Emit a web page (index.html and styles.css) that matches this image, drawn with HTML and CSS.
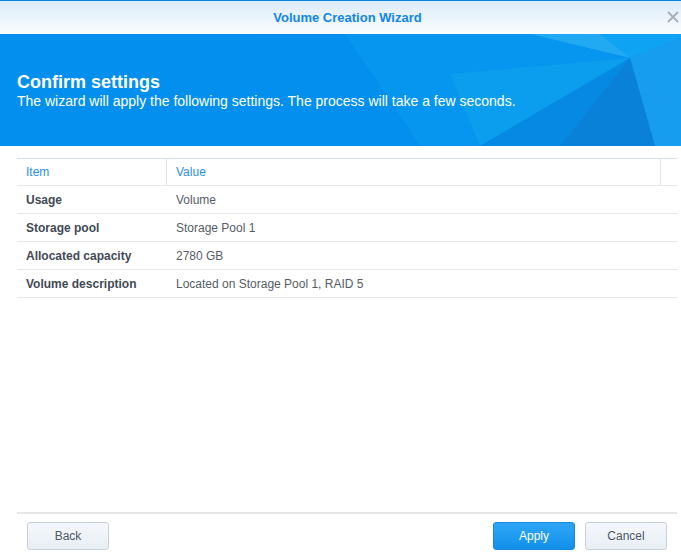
FILE: index.html
```html
<!DOCTYPE html>
<html>
<head>
<meta charset="utf-8">
<link rel="stylesheet" href="styles.css">
</head>
<body>
<div class="window">
  <div class="titlebar">
    <span class="title">Volume Creation Wizard</span>
    <span class="close">
      <svg width="12" height="12" viewBox="0 0 12 12"><path d="M1 1L11 11M11 1L1 11" stroke="#a9adb2" stroke-width="1.8" fill="none"/></svg>
    </span>
  </div>
  <div class="banner">
    <svg class="banner-art" width="681" height="112" viewBox="0 0 681 112" preserveAspectRatio="none">
      <polygon points="345,0 420,112 0,112 0,0" fill="#0a8ae6" opacity="0.25"/>
      <polygon points="345,0 530,0 630,24 480,112 420,112" fill="#0b9af0" opacity="0.5"/>
      <polygon points="530,0 681,0 630,24" fill="#25acf2" opacity="0.9"/>
      <polygon points="600,0 681,0 681,4 630,24" fill="#0ea4f3"/>
      <polygon points="630,24 681,4 681,112 655,112" fill="#1a9eee" opacity="0.9"/>
      <polygon points="630,24 655,112 560,112" fill="#0a7fd6" opacity="0.9"/>
      <polygon points="630,24 560,112 480,112" fill="#0688e0" opacity="0.9"/>
      <polygon points="450,40 630,24 480,112" fill="#10a6ee" opacity="0.5"/>
    </svg>
    <div class="banner-text">
      <h1>Confirm settings</h1>
      <p>The wizard will apply the following settings. The process will take a few seconds.</p>
    </div>
  </div>
  <div class="content">
    <div class="grid">
      <div class="row head">
        <div class="c1">Item</div>
        <div class="c2">Value</div>
        <div class="c3"></div>
      </div>
      <div class="row">
        <div class="c1 label">Usage</div>
        <div class="c2">Volume</div>
      </div>
      <div class="row">
        <div class="c1 label">Storage pool</div>
        <div class="c2">Storage Pool 1</div>
      </div>
      <div class="row">
        <div class="c1 label">Allocated capacity</div>
        <div class="c2">2780 GB</div>
      </div>
      <div class="row">
        <div class="c1 label">Volume description</div>
        <div class="c2">Located on Storage Pool 1, RAID 5</div>
      </div>
    </div>
  </div>
  <div class="footer">
    <button class="btn">Back</button>
    <div class="right">
      <button class="btn primary">Apply</button>
      <button class="btn">Cancel</button>
    </div>
  </div>
</div>
</body>
</html>
```

FILE: styles.css
```css
* { box-sizing: border-box; }
html, body { margin: 0; padding: 0; }
body {
  width: 681px;
  height: 555px;
  overflow: hidden;
  background: #ffffff;
  font-family: "Liberation Sans", Arial, sans-serif;
}
.window {
  display: flex;
  flex-direction: column;
  height: 555px;
}
.titlebar {
  height: 34px;
  border-top: 1px solid #0a86e0;
  background: linear-gradient(#dbebf9, #fbfdff);
  display: flex;
  align-items: center;
  justify-content: center;
  padding-left: 14px;
  position: relative;
}
.title {
  font-size: 13px;
  font-weight: bold;
  color: #1186e3;
  margin-top: -1px;
}
.close {
  position: absolute;
  right: 2px;
  top: 10px;
  width: 12px;
  height: 12px;
  display: flex;
}
.banner {
  height: 112px;
  background: #0190ef;
  position: relative;
  overflow: hidden;
  display: flex;
  align-items: center;
}
.banner-art {
  position: absolute;
  left: 0;
  top: 0;
}
.banner-text {
  position: relative;
  padding-left: 17px;
  color: #ffffff;
  margin-top: 1px;
}
.banner-text h1 {
  margin: 0;
  font-size: 18px;
  font-weight: bold;
  line-height: 20px;
}
.banner-text p {
  margin: 1px 0 0 0;
  font-size: 14px;
  line-height: 16px;
}
.content {
  flex: 1;
  padding: 12px 4px 0 17px;
}
.grid {
  display: flex;
  flex-direction: column;
  border-top: 1px solid #d4e2f0;
}
.row {
  display: flex;
  height: 28px;
  border-bottom: 1px solid #e8e8e8;
  align-items: center;
  font-size: 12px;
  color: #555c66;
}
.row.head {
  color: #2a8ee8;
  height: 27px;
}
.c1 {
  width: 150px;
  padding-left: 9px;
  height: 100%;
  display: flex;
  align-items: center;
}
.head .c1 { border-right: 1px solid #dbe6f2; }
.c2 {
  flex: 1;
  padding-left: 9px;
  height: 100%;
  display: flex;
  align-items: center;
}
.head .c2 { border-right: 1px solid #dbe6f2; }
.c3 { width: 16px; }
.label {
  font-weight: bold;
  color: #414a55;
}
.footer {
  height: 43px;
  margin: 0 4px 0 17px;
  border-top: 2px solid #e6e6e6;
  display: flex;
  justify-content: space-between;
  padding: 8px 10px 0 10px;
}
.right {
  display: flex;
  gap: 10px;
}
.btn {
  width: 82px;
  height: 28px;
  border: 1px solid #c6d0da;
  border-radius: 3px;
  background: linear-gradient(#f4f8fc, #e8eef4);
  color: #4e5864;
  font-family: "Liberation Sans", Arial, sans-serif;
  font-size: 12px;
  padding: 0;
}
.btn.primary {
  background: linear-gradient(#2ea6f6, #1190ea);
  border-color: #1b86d6;
  color: #ffffff;
}
```
